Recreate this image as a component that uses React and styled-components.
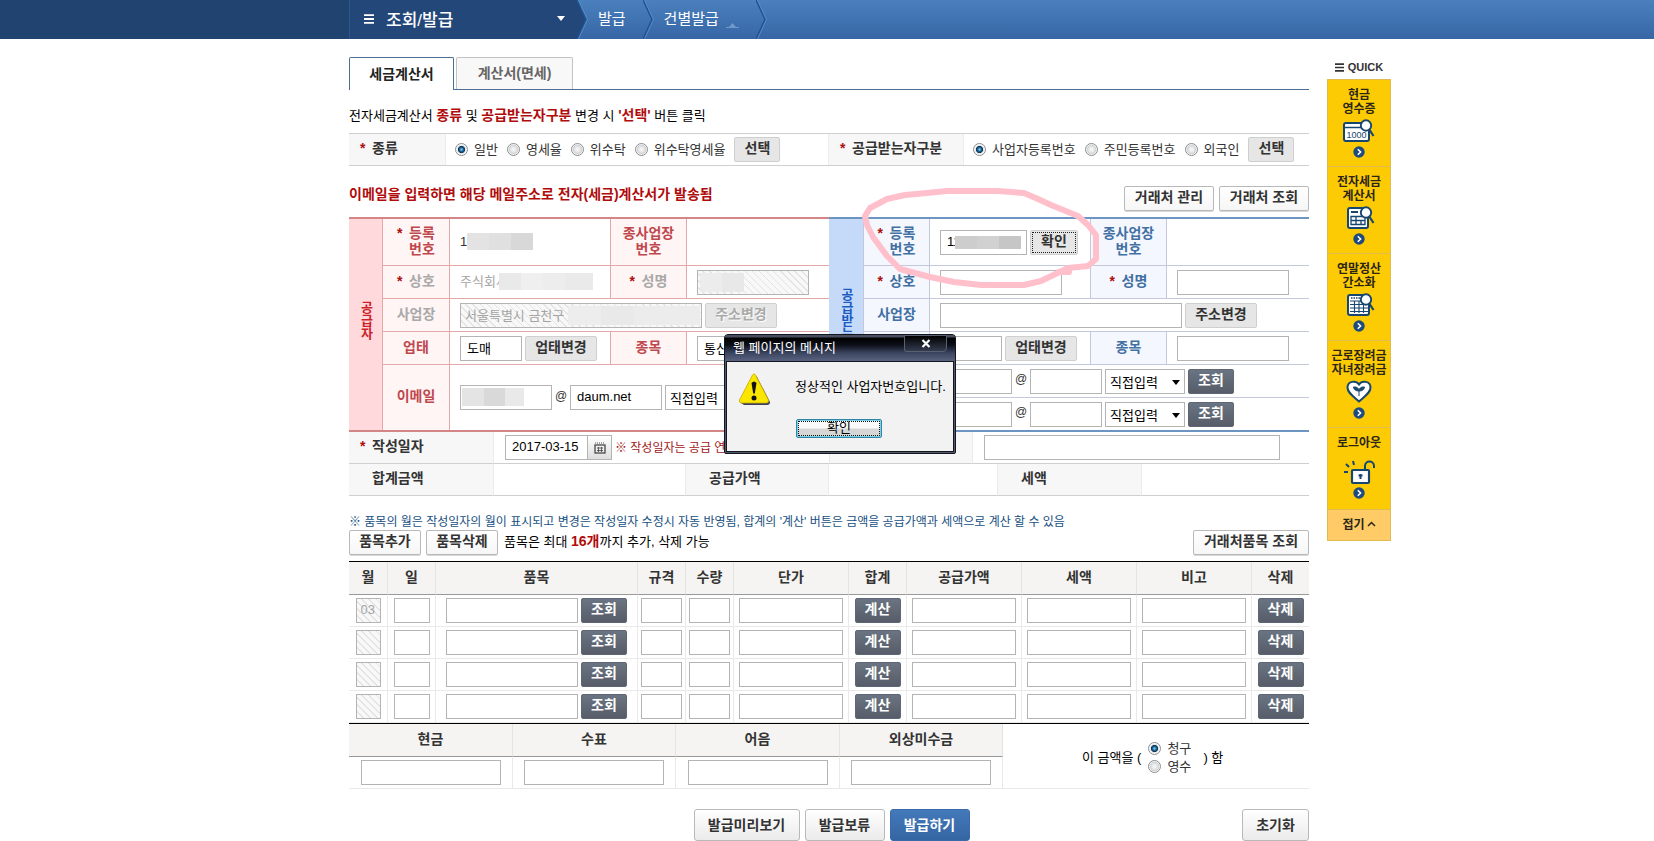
import React, { Component } from 'react'
import styled, { createGlobalStyle, css } from 'styled-components'


const GlobalStyle = createGlobalStyle`
  * {
    box-sizing: border-box;
  }

  body {
    margin: 0;
    background: #fff;
    color: #000;
    font: 13px/18px "Liberation Sans", "Noto Sans CJK KR", sans-serif;
  }

  input, button, select {
    font-family: inherit;
    margin: 0;
  }

  h2, p, ul {
    margin: 0;
    padding: 0;
  }
`

const columns = css`
  display: grid;
  grid-template-columns: minmax(0, 1fr) minmax(0, 960px) minmax(0, 1fr);
  padding-left: 4px;
`

/* ---------- header ---------- */

const Header = styled.header`
  ${columns}
  height: 39px;
  background: linear-gradient(#4a80bd, #3766a5);

  &::before {
    content: '';
    margin-left: -4px;
    background: #214370;
  }
`

const Crumbs = styled.nav`
  display: flex;
  align-items: center;
  color: #fff;
  font-size: 15px;

  a {
    display: flex;
    align-items: flex-end;
    gap: 7px;
    color: #fff;
    text-decoration: none;
    padding: 0 17px 2px 10px;
  }

  svg {
    display: block;
    flex: none;
  }
`

const MenuButton = styled.button`
  display: flex;
  align-items: center;
  gap: 12px;
  width: 228px;
  height: 39px;
  padding: 0 12px 2px 14px;
  border: 0;
  border-left: 1px solid #2c568c;
  background: #24477a;
  color: #fff;
  font-size: 17px;
  font-weight: 500;

  span {
    flex: 1;
    text-align: left;
  }
`

/* ---------- layout ---------- */

const Page = styled.div`
  ${columns}
`

const Main = styled.main`
  position: relative;
  grid-column: 2;
  padding-top: 18px;
`

const Tabs = styled.div`
  display: flex;
  gap: 2px;
  height: 33px;
  border-bottom: 1px solid #4c6d94;
`

const Tab = styled.button`
  width: ${props => props.$active ? '105px' : '117px'};
  height: ${props => props.$active ? '33px' : '32px'};
  padding: 0 0 3px;
  border: 1px solid ${props => props.$active ? '#4c6d94' : '#c3c3c3'};
  border-bottom: 0;
  border-radius: 2px 2px 0 0;
  background: ${props => props.$active ? '#fff' : '#f8f8f8'};
  color: ${props => props.$active ? '#222' : '#666'};
  font-size: 14px;
  font-weight: bold;
`

const Guide = styled.p`
  margin: 17px 0 8px;
  height: 18px;
  word-break: keep-all;
`

const Red = styled.b`
  color: #b00c0c;
  font-size: 14px;
  line-height: 16px;
`

const Star = styled.span`
  display: inline-block;
  width: 12px;
  color: #b00c0c;
  font-weight: bold;
  text-align: left;
`

const KindRow = styled.div`
  display: flex;
  height: 33px;
  border-top: 1px solid #cfcfcf;
  border-bottom: 1px solid #cfcfcf;
`

const KindLabel = styled.div`
  width: ${props => props.$wide ? '135px' : '97px'};
  padding: 5px 0 0 11px;
  border-right: 1px solid #ebebeb;
  background: #f7f7f7;
  color: #333;
  font-size: 14px;
  font-weight: bold;
`

const KindOptions = styled.div`
  display: flex;
  align-items: center;
  gap: 9px;
  padding-left: 9px;
  flex: ${props => props.$grow ? '1' : '0 0 383px'};

  ${props => !props.$grow && 'border-right: 1px solid #ebebeb;'}
`

const RadioLabel = styled.label`
  display: flex;
  align-items: center;
  gap: 6px;
  color: #333;
  white-space: nowrap;
`

const Radio = styled.input`
  appearance: none;
  width: 13px;
  height: 13px;
  border: 1px solid #8a8d90;
  border-radius: 50%;
  background: radial-gradient(circle, #f2f2f2 20%, #d2d4d6 55%, #fff 70%);

  &:checked {
    background: radial-gradient(circle, #8fd0ee 0, #16669a 25%, #12334f 42%, #dfe5ea 50%, #fff 70%);
  }
`

const TitleRow = styled.div`
  display: flex;
  justify-content: space-between;
  align-items: flex-start;
  margin: 20px 0 6px;
  height: 25px;

  h2 {
    color: #b00c0c;
    font-size: 14px;
    line-height: 16px;
    font-weight: bold;
  }
`

const ButtonGroup = styled.div`
  display: flex;
  align-items: center;
  gap: 5px;
`

/* ---------- controls ---------- */

const tones = {
  white: css`
    border-color: #b9b9b9;
    background: linear-gradient(#fff, #f6f6f6);
    color: #333;
    box-shadow: 0 1px 0 #d8d8d8;
  `,
  grey: css`
    border-color: #cfcfcf;
    background: #e6e6e6;
    color: #333;
  `,
  dark: css`
    border-color: #5f6774;
    background: linear-gradient(#6a7482, #575c68);
    color: #fff;
  `
}

const Button = styled.button`
  flex: none;
  width: ${props => props.$w}px;
  height: 25px;
  padding: 0 0 3px;
  border: 1px solid;
  border-radius: 2px;
  font-size: 14px;
  line-height: 20px;
  font-weight: bold;
  white-space: nowrap;
  ${props => tones[props.$tone]}

  &:disabled {
    color: #aaa;
    text-shadow: 1px 1px 0 #fff;
  }

  ${props => props.$focused && css`
    outline: 1px dotted #222;
    outline-offset: -3px;
  `}
`

const Input = styled.input`
  flex: none;
  width: ${props => props.$w}px;
  height: 25px;
  padding: 0 6px 2px;
  border: 1px solid #b4b4b4;
  background: #fff;
  color: #000;
  font-size: 13px;

  &:disabled {
    padding: 0 4px 2px;
    background: repeating-linear-gradient(45deg, #f8f8f8 0 4px, #e4e4e4 4px 5px);
    color: #a5a5a5;
  }
`

const Masked = styled.div`
  display: flex;
  position: relative;
`

/* blurred-out block lying over a private value */
const Mosaic = styled.span`
  position: absolute;
  left: ${props => props.$x}px;
  top: ${props => props.$y}px;
  width: ${props => props.$w}px;
  height: ${props => props.$h}px;
  background: linear-gradient(90deg, ${props => props.$colors});
`

const SelectBox = styled.span`
  display: flex;
  position: relative;

  select {
    appearance: none;
    width: 80px;
    height: 25px;
    padding: 3px 4px 0;
    border: 1px solid #b4b4b4;
    border-radius: 0;
    background: #fff;
    color: #000;
    font-size: 13px;
    line-height: 18px;
  }

  svg {
    position: absolute;
    right: 5px;
    top: 11px;
    pointer-events: none;
  }
`

const Line = styled.div`
  display: flex;
  align-items: center;
  gap: 3px;
  justify-content: ${props => props.$center ? 'center' : 'flex-start'};
`

const At = styled.span`
  width: 12px;
  padding-bottom: 4px;
  color: #333;
  font-size: 12px;
  text-align: center;
`

/* ---------- supplier / buyer ---------- */

const Parties = styled.div`
  display: grid;
  grid-template-columns: 1fr 1fr;
`

const sides = {
  supplier: { edge: '#d48585', line: '#e3a9a9', head: '#ffd9dc', label: '#fff5f5', text: '#bf474e', name: '#cf1f2b' },
  buyer: { edge: '#6c95c2', line: '#c4c8dc', head: '#c4daf8', label: '#f5f7ff', text: '#4270a3', name: '#1c5bc4' }
}

const PartyTable = styled.table`
  width: 100%;
  table-layout: fixed;
  border-spacing: 0;
  border-top: 2px solid ${props => sides[props.$side].edge};
  border-bottom: 2px solid ${props => sides[props.$side].edge};

  th, td {
    height: 33px;
    padding: 0;
    border-bottom: 1px solid ${props => sides[props.$side].line};
  }

  td {
    padding-left: 10px;
  }

  th {
    padding-bottom: 3px;
    border-right: 1px solid ${props => sides[props.$side].line};
    background: ${props => sides[props.$side].label};
    color: ${props => sides[props.$side].text};
    font-size: 14px;
    line-height: 16px;
    font-weight: bold;
  }

  th.off {
    color: #a9a9a9;
  }

  td + th {
    border-left: 1px solid ${props => sides[props.$side].line};
  }

  tr:first-child > * {
    height: 47px;
  }

  th.side {
    padding-bottom: 4px;
    border-bottom: 0;
    background: ${props => sides[props.$side].head};
    color: ${props => sides[props.$side].name};
    font-size: 13px;
  }

  .side span {
    display: inline-block;
    writing-mode: vertical-rl;
  }

  .last {
    height: 32px;
    border-bottom: 0;
  }

  .tall {
    height: 65px;
    border-bottom: 0;
  }
`

const StarLabel = styled.span`
  display: inline-flex;
  text-align: right;
`

const RegNo = styled.span`
  color: #333;
  font-size: 13px;
`

const Corp = styled.span`
  color: #a5a5a5;
`

/* ---------- date and sums ---------- */

const SumTable = styled.table`
  width: 100%;
  table-layout: fixed;
  border-spacing: 0;

  th, td {
    height: 32px;
    padding: 0;
    border-bottom: 1px solid #cfcfcf;
  }

  th {
    padding: 0 0 3px 23px;
    border-right: 1px solid #ebebeb;
    background: #f7f7f7;
    color: #333;
    font-size: 14px;
    text-align: left;
  }

  th.star {
    padding-left: 11px;
  }

  td {
    padding-left: 11px;
    color: #a01818;
  }

  td + th {
    border-left: 1px solid #ebebeb;
  }
`

const DateField = styled.div`
  display: flex;

  input {
    border-right: 0;
  }

  button {
    display: flex;
    align-items: center;
    justify-content: center;
    width: 25px;
    height: 25px;
    padding: 0;
    border: 1px solid #b4b4b4;
    background: linear-gradient(#fff, #dedede);
  }
`

const Clip = styled.span`
  white-space: nowrap;
  font-size: 12px;
`

/* ---------- items ---------- */

const Note = styled.p`
  margin-top: 18px;
  color: #17507f;
  font-size: 12px;
  line-height: 16px;
`

const ItemBar = styled.div`
  display: flex;
  align-items: center;
  gap: 5px;
  height: 25px;
  margin-bottom: 6px;

  p {
    flex: 1;
    padding: 0 0 2px 1px;
  }
`

const GridTable = styled.table`
  width: 100%;
  table-layout: fixed;
  border-spacing: 0;
  border-top: 1px solid #000;

  th {
    height: 33px;
    padding: 0 0 2px;
    border-right: 1px solid #e4e4e4;
    border-bottom: 1px solid #999;
    background: #f5f4f2;
    color: #333;
    font-size: 14px;
  }

  td {
    height: 32px;
    padding: 0;
    border-right: 1px solid #e9e9e9;
    border-bottom: 1px solid #e9e9e9;
  }

  tr > .end {
    border-right: 0;
  }
`

const Purpose = styled.div`
  display: flex;
  align-items: center;
  padding: 3px 0 0 79px;
  gap: 7px;

  div {
    width: 48px;
  }
`

const Actions = styled.div`
  display: grid;
  grid-template-columns: 1fr auto 1fr;
  margin-top: 20px;
  padding-left: 5px;

  > :last-child {
    justify-self: end;
  }
`

const BigButton = styled.button`
  width: ${props => props.$w}px;
  height: 32px;
  padding: 0 0 2px;
  border: 1px solid ${props => props.$blue ? '#3b6aa8' : '#b9b9b9'};
  border-radius: 3px;
  background: ${props => props.$blue ? 'linear-gradient(#4479ba, #3565a3)' : 'linear-gradient(#fff, #ebebeb)'};
  color: ${props => props.$blue ? '#fff' : '#333'};
  font-size: 14px;
  font-weight: bold;
`

/* ---------- quick menu ---------- */

const Quick = styled.aside`
  width: 64px;
  margin: 17px 0 0 18px;
`

const QuickTitle = styled.p`
  display: flex;
  align-items: center;
  justify-content: center;
  gap: 4px;
  height: 23px;
  padding-bottom: 1px;
  color: #333;
  font-size: 11px;
  font-weight: bold;
`

const QuickLink = styled.a`
  display: flex;
  flex-direction: column;
  align-items: center;
  height: ${props => props.$single ? '82px' : '87px'};
  padding-top: 8px;
  border: 1px solid #e0bb50;
  border-bottom-width: 0;
  background: #fdcb04;
  color: #2b2618;
  font-size: 12px;
  line-height: 14px;
  font-weight: bold;
  text-align: center;
  text-decoration: none;
  white-space: pre;

  svg {
    display: block;
    flex: none;
  }

  svg:first-of-type {
    margin: ${props => props.$single ? '10px 0 2px' : '3px 0 4px'};
  }
`

const Fold = styled.button`
  display: flex;
  align-items: center;
  justify-content: center;
  gap: 2px;
  width: 64px;
  height: 32px;
  padding: 0 0 3px;
  border: 1px solid #e0bb50;
  background: #ffcb66;
  color: #2b2618;
  font-size: 12px;
  font-weight: bold;
`

/* ---------- floating ---------- */

const Marker = styled.svg`
  position: absolute;
  left: 512px;
  top: 148px;
  pointer-events: none;
`

const Dialog = styled.div`
  position: absolute;
  left: 375px;
  top: 295px;
  width: 232px;
  height: 120px;
  border: 1px solid #14161f;
  border-radius: 4px 4px 2px 2px;
  background: #545b6c;
  padding: 0 1px 1px;
`

const DialogTitle = styled.div`
  display: flex;
  justify-content: space-between;
  height: 26px;
  padding: 0 8px 0 8px;
  margin: 0 -1px;
  border-radius: 3px 3px 0 0;
  background: linear-gradient(#4b5060 0 2px, #000 3px, #0c0f18 10px, #3c4560 18px, #59637f);
  color: #fff;
  line-height: 26px;

  button {
    display: flex;
    align-items: center;
    justify-content: center;
    width: 43px;
    height: 17px;
    padding: 0;
    border: 1px solid #59606f;
    border-radius: 0 0 4px 2px;
    background: linear-gradient(#000, #343c50);
  }
`

const DialogBody = styled.div`
  display: grid;
  grid-template-columns: 54px 1fr;
  height: 91px;
  border: 1px solid #14161f;
  background: #f2f2f2;

  > svg {
    margin: 11px 0 0 12px;
  }

  p {
    padding: 16px 0 0 14px;
    white-space: nowrap;
  }

  button {
    grid-column: 2;
    width: 86px;
    height: 19px;
    margin-left: 15px;
    padding: 0;
    border: 1px solid #2d86a8;
    border-radius: 2px;
    background: linear-gradient(#fafafa 45%, #d6d6d6 55%);
    box-shadow: inset 0 0 0 1px #7fd0e4;
    outline: 1px dotted #111;
    outline-offset: -3px;
    color: #000;
    font-size: 13px;
    line-height: 14px;
  }
`


const Arrow = () => (
  <svg width="8" height="5" viewBox="0 0 8 5"><path d="M0 0h8L4 5z" fill="currentColor" /></svg>
)

const Chevron = ({ fill = 'none' }) => (
  <svg width="11" height="39" viewBox="0 0 11 39">
    <path d="M0 0L9 19.5L0 39" fill={fill} stroke="#1f5490" strokeWidth="1.5" />
    <path d="M1.5 0L10.5 19.5L1.5 39" fill="none" stroke="#5b92cc" strokeWidth="0.8" />
  </svg>
)

const Bars = ({ size, color }) => (
  <svg width={size} height={size} viewBox="0 0 10 10"><path d="M0 1.2h10M0 5h10M0 8.8h10" stroke={color} strokeWidth="1.8" /></svg>
)

const Go = () => (
  <svg width="12" height="12" viewBox="0 0 12 12">
    <circle cx="6" cy="6" r="5.7" fill="#1f4a7c" />
    <path d="M4.8 3.2L7.6 6L4.8 8.8" fill="none" stroke="#fff" strokeWidth="1.6" />
  </svg>
)

const Lens = () => (
  <g fill="#fff" stroke="#17466e">
    <path d="M26 10L30.5 17" strokeWidth="2.2" />
    <circle cx="23" cy="6.5" r="5.2" strokeWidth="1.9" />
  </g>
)

const icons = {
  cash: (
    <svg width="32" height="23" viewBox="0 0 32 23">
      <rect x="1" y="4" width="25" height="18" rx="2" fill="#fff" stroke="#17466e" strokeWidth="2" />
      <path d="M1 8.5h25" stroke="#17466e" strokeWidth="1.5" />
      <text x="13.5" y="19" fontSize="9" fontWeight="400" textAnchor="middle" fill="#17466e">1000</text>
      <Lens />
    </svg>
  ),
  invoice: (
    <svg width="32" height="23" viewBox="0 0 32 23">
      <rect x="5" y="2" width="20" height="20" rx="2" fill="#fff" stroke="#17466e" strokeWidth="2" />
      <path d="M8 6h7" stroke="#17466e" strokeWidth="2" />
      <path d="M8 10.5h14v8H8zM8 14.5h14M13 10.5v8M18 14.5v4" fill="none" stroke="#17466e" strokeWidth="1.3" />
      <Lens />
    </svg>
  ),
  yearEnd: (
    <svg width="32" height="23" viewBox="0 0 32 23">
      <rect x="5" y="2" width="21" height="20" rx="2" fill="#fff" stroke="#17466e" strokeWidth="2" />
      <path d="M8 5h9" stroke="#17466e" strokeWidth="1.4" strokeDasharray="1.5 1" />
      <path d="M7 8h18M7 11.5h18M7 15h18M7 18.5h18M11.5 8v12M16 8v12M20.5 10v10" stroke="#17466e" strokeWidth="1.1" />
      <Lens />
    </svg>
  ),
  heart: (
    <svg width="26" height="23" viewBox="0 0 26 23">
      <path d="M13 21.5C7 16 1.5 12.5 1.5 7.5C1.5 1 10 0 13 4.5C16 0 24.5 1 24.5 7.5C24.5 12.5 19 16 13 21.5Z" fill="#fff" stroke="#17466e" strokeWidth="2" />
      <path d="M13 16V10M13 11C11 11 8 10.5 7.5 7C10.5 6.5 13 8 13 11C13 8 15.5 6.5 18.5 7C18 10.5 15 11 13 11Z" fill="#17466e" stroke="#17466e" strokeWidth="1" />
    </svg>
  ),
  lock: (
    <svg width="32" height="25" viewBox="0 0 32 25">
      <path d="M1 12h4M3 4l3 3M10 1l1 4" stroke="#17466e" strokeWidth="2" />
      <path d="M22 12V6C22 0 31 0 31 6V8" fill="none" stroke="#17466e" strokeWidth="2" />
      <rect x="9" y="10" width="17" height="13" rx="1" fill="#fff" stroke="#17466e" strokeWidth="2.2" />
      <path d="M17.5 14v5M15.5 15.5h4" stroke="#17466e" strokeWidth="2" />
    </svg>
  )
}

const quickItems = [
  { icon: 'cash', text: '현금\n영수증' },
  { icon: 'invoice', text: '전자세금\n계산서' },
  { icon: 'yearEnd', text: '연말정산\n간소화' },
  { icon: 'heart', text: '근로장려금\n자녀장려금' },
  { icon: 'lock', text: '로그아웃' }
]

const itemCols = [
  ['월', 39], ['일', 48], ['품목', 202], ['규격', 48], ['수량', 48], ['단가', 115],
  ['합계', 58], ['공급가액', 115], ['세액', 115], ['비고', 115], ['삭제', 57]
]

const payCols = ['현금', '수표', '어음', '외상미수금']


const MailSelect = () => (
  <SelectBox>
    <select aria-label="메일 도메인"><option>직접입력</option></select>
    <Arrow />
  </SelectBox>
)

const Options = ({ name, list }) => list.map((text, i) => (
  <RadioLabel key={text}>
    <Radio type="radio" name={name} defaultChecked={i === 0} />
    {text}
  </RadioLabel>
))

const Cols = ({ list }) => (
  <colgroup>{list.map((w, i) => <col key={i} style={{ width: w }} />)}</colgroup>
)

const Supplier = () => (
  <PartyTable $side="supplier">
    <Cols list={[34, 67, 160, 77, 142]} />
    <tbody>
      <tr>
        <th className="side" rowSpan={5}><span>공급자</span></th>
        <th><StarLabel><Star>*</Star><span>등록<br />번호</span></StarLabel></th>
        <td>
          <Masked>
            <RegNo>1</RegNo>
            <Mosaic $x={7} $y={0} $w={66} $h={17} $colors="#e3e3e3 0 33%, #e0e0e0 33% 67%, #d8d8d8 67%" />
          </Masked>
        </td>
        <th>종사업장<br />번호</th>
        <td></td>
      </tr>
      <tr>
        <th className="off"><Star>*</Star>상호</th>
        <td>
          <Masked>
            <Corp>주식회사</Corp>
            <Mosaic $x={39} $y={0} $w={94} $h={17} $colors="#e9e9e9 0 23%, #efefef 23% 47%, #ededed 47% 70%, #eaeaea 70%" />
          </Masked>
        </td>
        <th className="off"><Star>*</Star>성명</th>
        <td>
          <Masked>
            <Input $w={112} disabled aria-label="성명" />
            <Mosaic $x={3} $y={3} $w={44} $h={19} $colors="#ececec 0 50%, #e8e8e8 50%" />
          </Masked>
        </td>
      </tr>
      <tr>
        <th className="off">사업장</th>
        <td colSpan={3}>
          <Line>
            <Masked>
              <Input $w={242} disabled defaultValue="서울특별시 금천구" aria-label="사업장" />
              <Mosaic $x={108} $y={3} $w={132} $h={19} $colors="#ededed 0 25%, #e9e9e9 25% 50%, #ececec 50%" />
            </Masked>
            <Button $w={72} $tone="grey" disabled>주소변경</Button>
          </Line>
        </td>
      </tr>
      <tr>
        <th>업태</th>
        <td>
          <Line>
            <Input $w={62} defaultValue="도매" aria-label="업태" />
            <Button $w={72} $tone="grey">업태변경</Button>
          </Line>
        </td>
        <th>종목</th>
        <td><Line><Input $w={112} defaultValue="통신" aria-label="종목" /></Line></td>
      </tr>
      <tr>
        <th className="tall">이메일</th>
        <td className="tall" colSpan={3}>
          <Line>
            <Masked>
              <Input $w={92} aria-label="이메일 아이디" />
              <Mosaic $x={2} $y={3} $w={62} $h={18} $colors="#e4e4e4 0 36%, #d9d9d9 36% 70%, #e9e9e9 70%" />
            </Masked>
            <At>@</At>
            <Input $w={92} defaultValue="daum.net" aria-label="이메일 도메인" />
            <MailSelect />
          </Line>
        </td>
      </tr>
    </tbody>
  </PartyTable>
)

const Mail = () => (
  <Line>
    <Input $w={72} aria-label="이메일 아이디" />
    <At>@</At>
    <Input $w={72} aria-label="이메일 도메인" />
    <MailSelect />
    <Button $w={46} $tone="dark">조회</Button>
  </Line>
)

const Buyer = () => (
  <PartyTable $side="buyer">
    <Cols list={[35, 66, 160, 77, 142]} />
    <tbody>
      <tr>
        <th className="side" rowSpan={6}><span>공급받는자</span></th>
        <th><StarLabel><Star>*</Star><span>등록<br />번호</span></StarLabel></th>
        <td>
          <Line>
            <Masked>
              <Input $w={87} defaultValue="11" aria-label="등록번호" />
              <Mosaic $x={15} $y={6} $w={66} $h={13} $colors="#cdcdcd 0 33%, #d1d1d1 33% 67%, #c6c6c6 67%" />
            </Masked>
            <Button $w={48} $tone="grey" $focused>확인</Button>
          </Line>
        </td>
        <th>종사업장<br />번호</th>
        <td></td>
      </tr>
      <tr>
        <th><Star>*</Star>상호</th>
        <td><Line><Input $w={122} aria-label="상호" /></Line></td>
        <th><Star>*</Star>성명</th>
        <td><Line><Input $w={112} aria-label="성명" /></Line></td>
      </tr>
      <tr>
        <th>사업장</th>
        <td colSpan={3}>
          <Line>
            <Input $w={242} aria-label="사업장" />
            <Button $w={72} $tone="grey">주소변경</Button>
          </Line>
        </td>
      </tr>
      <tr>
        <th>업태</th>
        <td>
          <Line>
            <Input $w={62} aria-label="업태" />
            <Button $w={72} $tone="grey">업태변경</Button>
          </Line>
        </td>
        <th>종목</th>
        <td><Line><Input $w={112} aria-label="종목" /></Line></td>
      </tr>
      <tr>
        <th className="tall" rowSpan={2}>이메일</th>
        <td colSpan={3}><Mail /></td>
      </tr>
      <tr>
        <td className="last" colSpan={3}><Mail /></td>
      </tr>
    </tbody>
  </PartyTable>
)

const Summary = () => (
  <SumTable>
    <Cols list={[145, 191, 144, 144, 24, 145, 167]} />
    <tbody>
      <tr>
        <th className="star"><Star>*</Star>작성일자</th>
        <td colSpan={2}>
          <Line>
            <DateField>
              <Input $w={82} defaultValue="2017-03-15" aria-label="작성일자" />
              <button aria-label="달력">
                <svg width="12" height="12" viewBox="0 0 12 12">
                  <path d="M1 1h10" stroke="#555" strokeWidth="1" strokeDasharray="1 1" />
                  <rect x="1" y="3" width="10" height="8" fill="none" stroke="#555" strokeWidth="1.4" />
                  <path d="M3 6h6M3 8.5h6M4.5 5v5M7.5 5v5" stroke="#555" strokeWidth="0.9" />
                </svg>
              </button>
            </DateField>
            <Clip>※ 작성일자는 공급 연월일</Clip>
          </Line>
        </td>
        <th></th>
        <td colSpan={3}><Line><Input $w={296} aria-label="비고" /></Line></td>
      </tr>
      <tr>
        <th>합계금액</th>
        <td></td>
        <th>공급가액</th>
        <td colSpan={2}></td>
        <th>세액</th>
        <td></td>
      </tr>
    </tbody>
  </SumTable>
)

const ItemRow = ({ month }) => (
  <tr>
    <td><Line $center><Input $w={25} disabled defaultValue={month} aria-label="월" /></Line></td>
    <td><Line $center><Input $w={36} aria-label="일" /></Line></td>
    <td>
      <Line $center>
        <Input $w={132} aria-label="품목" />
        <Button $w={46} $tone="dark">조회</Button>
      </Line>
    </td>
    <td><Line $center><Input $w={41} aria-label="규격" /></Line></td>
    <td><Line $center><Input $w={41} aria-label="수량" /></Line></td>
    <td><Line $center><Input $w={104} aria-label="단가" /></Line></td>
    <td><Line $center><Button $w={46} $tone="dark">계산</Button></Line></td>
    <td><Line $center><Input $w={104} aria-label="공급가액" /></Line></td>
    <td><Line $center><Input $w={104} aria-label="세액" /></Line></td>
    <td><Line $center><Input $w={104} aria-label="비고" /></Line></td>
    <td className="end"><Line $center><Button $w={46} $tone="dark">삭제</Button></Line></td>
  </tr>
)

const Alert = ({ onClose }) => (
  <Dialog role="alertdialog" aria-label="웹 페이지의 메시지">
    <DialogTitle>
      <span>웹 페이지의 메시지</span>
      <button onClick={onClose} aria-label="닫기">
        <svg width="10" height="9" viewBox="0 0 10 9"><path d="M1.5 1l7 7M8.5 1l-7 7" stroke="#fff" strokeWidth="2.2" /></svg>
      </button>
    </DialogTitle>
    <DialogBody>
      <svg width="32" height="32" viewBox="0 0 32 32">
        <path d="M17.5 3L31 29Q31 32 28 32H5L2 30Z" fill="#3c3f5c" />
        <path d="M13.5 2Q15 -0.5 16.5 2L29.5 27Q30 30 27.5 30H2.5Q0 30 0.5 27Z" fill="#fbe600" stroke="#c9a800" strokeWidth="0.8" />
        <path d="M12.5 10Q15 7 17.5 10L15.8 20.5H14.2Z" fill="#111" />
        <circle cx="15" cy="25" r="2.5" fill="#111" />
      </svg>
      <p>정상적인 사업자번호입니다.</p>
      <button onClick={onClose}>확인</button>
    </DialogBody>
  </Dialog>
)


class App extends Component {
  state = {
    showAlert: true
  }

  closeAlert = () => {
    this.setState({
      showAlert: false
    })
  }

  render(){
    return (
      <>
        <GlobalStyle />
        <Header>
          <Crumbs>
            <MenuButton>
              <Bars size={10} color="#fff" />
              <span>조회/발급</span>
              <Arrow />
            </MenuButton>
            <Chevron fill="#24477a" />
            <a href="#issue">발급</a>
            <Chevron />
            <a href="#each">
              건별발급
              <svg width="13" height="6" viewBox="0 0 13 6"><path d="M0 5h13v1H0zM3 5l3.5 -4l3.5 4z" fill="#7099c9" /></svg>
            </a>
            <Chevron />
          </Crumbs>
        </Header>

        <Page>
          <Main>
            <Tabs>
              <Tab $active>세금계산서</Tab>
              <Tab>계산서(면세)</Tab>
            </Tabs>

            <Guide>
              전자세금계산서 <Red>종류</Red> 및 <Red>공급받는자구분</Red> 변경 시 <Red>'선택'</Red> 버튼 클릭
            </Guide>

            <KindRow>
              <KindLabel><Star>*</Star>종류</KindLabel>
              <KindOptions>
                <Options name="kind" list={['일반', '영세율', '위수탁', '위수탁영세율']} />
                <Button $w={46} $tone="grey">선택</Button>
              </KindOptions>
              <KindLabel $wide><Star>*</Star>공급받는자구분</KindLabel>
              <KindOptions $grow>
                <Options name="buyer" list={['사업자등록번호', '주민등록번호', '외국인']} />
                <Button $w={46} $tone="grey">선택</Button>
              </KindOptions>
            </KindRow>

            <TitleRow>
              <h2>이메일을 입력하면 해당 메일주소로 전자(세금)계산서가 발송됨</h2>
              <ButtonGroup>
                <Button $w={90} $tone="white">거래처 관리</Button>
                <Button $w={90} $tone="white">거래처 조회</Button>
              </ButtonGroup>
            </TitleRow>

            <Parties>
              <Supplier />
              <Buyer />
            </Parties>
            <Summary />

            <Note>※ 품목의 월은 작성일자의 월이 표시되고 변경은 작성일자 수정시 자동 반영됨, 합계의 '계산' 버튼은 금액을 공급가액과 세액으로 계산 할 수 있음</Note>
            <ItemBar>
              <Button $w={72} $tone="white">품목추가</Button>
              <Button $w={72} $tone="white">품목삭제</Button>
              <p>품목은 최대 <Red>16개</Red>까지 추가, 삭제 가능</p>
              <Button $w={116} $tone="white">거래처품목 조회</Button>
            </ItemBar>

            <GridTable>
              <Cols list={itemCols.map(col => col[1])} />
              <thead>
                <tr>
                  {itemCols.map(([name]) => <th key={name} className={name === '삭제' ? 'end' : ''}>{name}</th>)}
                </tr>
              </thead>
              <tbody>
                <ItemRow month="03" />
                <ItemRow />
                <ItemRow />
                <ItemRow />
              </tbody>
            </GridTable>

            <GridTable>
              <Cols list={[164, 163, 164, 163, 306]} />
              <tbody>
                <tr>
                  {payCols.map(name => <th key={name}>{name}</th>)}
                  <td className="end" rowSpan={2}>
                    <Purpose>
                      <span>이 금액을 (</span>
                      <div><Options name="purpose" list={['청구', '영수']} /></div>
                      <span>) 함</span>
                    </Purpose>
                  </td>
                </tr>
                <tr>
                  {payCols.map(name => <td key={name}><Line $center><Input $w={140} aria-label={name} /></Line></td>)}
                </tr>
              </tbody>
            </GridTable>

            <Actions>
              <span />
              <ButtonGroup>
                <BigButton $w={106}>발급미리보기</BigButton>
                <BigButton $w={80}>발급보류</BigButton>
                <BigButton $w={80} $blue>발급하기</BigButton>
              </ButtonGroup>
              <BigButton $w={67}>초기화</BigButton>
            </Actions>

            <Marker width="250" height="110" viewBox="0 0 250 110" fill="none" stroke="#ffc0cb" strokeWidth="6" strokeLinejoin="round" strokeLinecap="round">
              <path d="M44 8L66 6L86 4H137L163 6L177 12L190 18L217 29L227 38L235 48V72L227 79L207 81L180 94L163 98H120L93 95L69 90L39 82L26 69L12 50L6 38L4 29L9 21L26 12Z" />
              <path d="M198 85H208" />
            </Marker>

            {this.state.showAlert && <Alert onClose={this.closeAlert} />}
          </Main>

          <Quick>
            <QuickTitle><Bars size={9} color="#333" />QUICK</QuickTitle>
            {quickItems.map(item => (
              <QuickLink key={item.icon} href={'#' + item.icon} $single={item.icon === 'lock'}>
                {item.text}
                {icons[item.icon]}
                <Go />
              </QuickLink>
            ))}
            <Fold>
              접기
              <svg width="9" height="6" viewBox="0 0 9 6"><path d="M1 5L4.5 1.5L8 5" fill="none" stroke="#2b2618" strokeWidth="1.5" /></svg>
            </Fold>
          </Quick>
        </Page>
      </>
    )
  }
}

export default App
